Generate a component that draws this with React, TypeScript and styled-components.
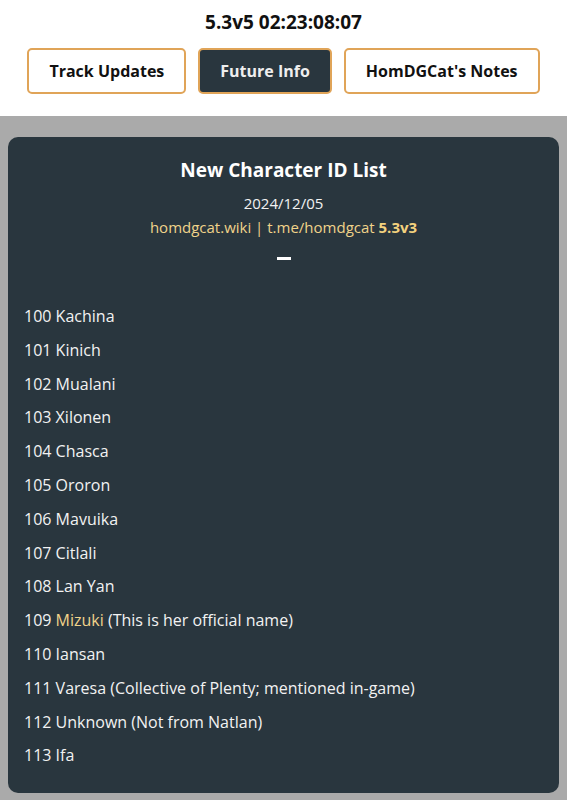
import React from 'react';
import styled, { createGlobalStyle } from 'styled-components';

const GlobalStyle = createGlobalStyle`
  html, body {
    margin: 0;
    padding: 0;
    background: #ffffff;
    font-family: "Open Sans", "Noto Sans", sans-serif;
  }
`;

const Header = styled.header`
  background: #ffffff;
  padding: 10px 0 22px;
  display: flex;
  flex-direction: column;
  align-items: center;
`;

const Countdown = styled.div`
  font-size: 19px;
  line-height: 24px;
  font-weight: 700;
  color: #111111;
`;

const Tabs = styled.nav`
  margin-top: 14px;
  display: flex;
  gap: 12px;
  justify-content: center;
`;

const Tab = styled.button<{ $active?: boolean }>`
  height: 46px;
  padding: 0 20px;
  border: 2px solid #e0a458;
  border-radius: 5px;
  background: ${(p) => (p.$active ? '#29363e' : '#ffffff')};
  color: ${(p) => (p.$active ? '#eeeeee' : '#111111')};
  font-family: inherit;
  font-size: 16px;
  font-weight: 700;
  cursor: pointer;
`;

const Stage = styled.main`
  background: #aaaaaa;
  padding: 21px 8px 8px;
`;

const Card = styled.section`
  background: #29363e;
  border-radius: 10px;
  padding: 19px 16px 20px;
  color: #f2f2f2;
`;

const Intro = styled.div`
  display: flex;
  flex-direction: column;
  align-items: center;
`;

const Title = styled.h1`
  margin: 0;
  font-size: 19px;
  line-height: 28px;
  font-weight: 700;
  color: #ffffff;
`;

const DateLine = styled.div`
  margin-top: 7px;
  font-size: 15px;
  line-height: 24px;
`;

const Links = styled.div`
  font-size: 15px;
  line-height: 24px;
  color: #f0d38a;
`;

const Version = styled.b`
  font-weight: 700;
  color: #f3d27e;
`;

const Dash = styled.div`
  margin-top: 18px;
  width: 14px;
  height: 3px;
  background: #ffffff;
`;

const List = styled.ul`
  list-style: none;
  margin: 40px 0 0;
  padding: 0;
`;

const Item = styled.li`
  height: 33.8px;
  line-height: 33.8px;
  font-size: 16px;
  color: #f2f2f2;
`;

const Highlight = styled.span`
  color: #f0d38a;
`;

const characters: { id: number; name: string; note?: string; highlight?: boolean }[] = [
  { id: 100, name: 'Kachina' },
  { id: 101, name: 'Kinich' },
  { id: 102, name: 'Mualani' },
  { id: 103, name: 'Xilonen' },
  { id: 104, name: 'Chasca' },
  { id: 105, name: 'Ororon' },
  { id: 106, name: 'Mavuika' },
  { id: 107, name: 'Citlali' },
  { id: 108, name: 'Lan Yan' },
  { id: 109, name: 'Mizuki', note: '(This is her official name)', highlight: true },
  { id: 110, name: 'Iansan' },
  { id: 111, name: 'Varesa', note: '(Collective of Plenty; mentioned in-game)' },
  { id: 112, name: 'Unknown', note: '(Not from Natlan)' },
  { id: 113, name: 'Ifa' },
];

export default function App() {
  return (
    <>
      <GlobalStyle />
      <Header>
        <Countdown>5.3v5 02:23:08:07</Countdown>
        <Tabs>
          <Tab>Track Updates</Tab>
          <Tab $active>Future Info</Tab>
          <Tab>HomDGCat's Notes</Tab>
        </Tabs>
      </Header>
      <Stage>
        <Card>
          <Intro>
            <Title>New Character ID List</Title>
            <DateLine>2024/12/05</DateLine>
            <Links>
              homdgcat.wiki | t.me/homdgcat <Version>5.3v3</Version>
            </Links>
            <Dash />
          </Intro>
          <List>
            {characters.map((c) => (
              <Item key={c.id}>
                {c.id}{' '}
                {c.highlight ? <Highlight>{c.name}</Highlight> : c.name}
                {c.note ? ` ${c.note}` : null}
              </Item>
            ))}
          </List>
        </Card>
      </Stage>
    </>
  );
}
